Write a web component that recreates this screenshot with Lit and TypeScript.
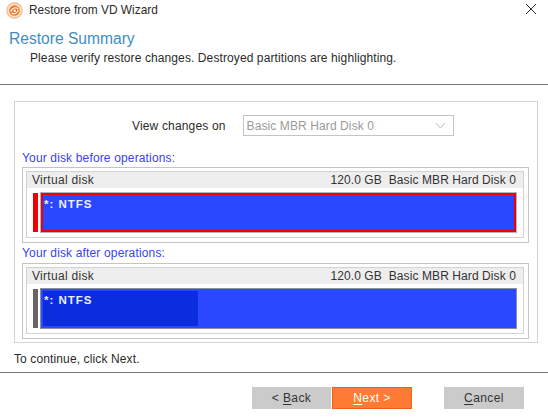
import { LitElement, html, css } from "lit";
import { customElement } from "lit/decorators.js";

@customElement("app-root")
export class AppRoot extends LitElement {
  static styles = css`
    :host { display: block; width: 548px; height: 419px; background: #fff; overflow: hidden;
      font-family: "Liberation Sans", Arial, sans-serif; font-size: 12px; color: #2b2b2b; }
    .title { height: 20px; display: flex; align-items: center; padding-left: 6px; gap: 6px; font-size: 11.9px; }
    .title svg.logo { width: 17px; height: 17px; flex: none; }
    .title span { flex: 1; }
    .title svg.close { width: 12px; height: 12px; margin-right: 11px; margin-top: -3px; }
    .head { height: 65px; box-sizing: border-box; border-bottom: 1px solid #777; padding: 9px 0 0 9px; }
    .head h1 { margin: 0; font-size: 15.6px; font-weight: 400; color: #3c8ec4; line-height: 19px; }
    .head p { margin: 3px 0 0 21px; font-size: 12px; line-height: 14px; letter-spacing: 0.1px; }
    .panel { margin: 16px 10px 0 14px; height: 242px; box-sizing: border-box; border: 1px solid #d4d4d4; padding: 13px 7px 0 7px; }
    .view { display: flex; align-items: center; height: 21px; padding-left: 110px; gap: 17px; }
    .view > span { letter-spacing: 0.16px; }
    .select { width: 211px; height: 21px; box-sizing: border-box; border: 1px solid #c4c4c4; display: flex; align-items: center;
      justify-content: space-between; padding: 0 7px 0 3px; color: #9a9a9a; letter-spacing: 0.1px; }
    .select svg { width: 11px; height: 7px; }
    .label { color: #3a3ff0; height: 14px; line-height: 14px; margin-top: 15px; letter-spacing: 0.15px; }
    .label.second { margin-top: 3px; }
    .outer { margin-top: 2px; width: 507px; height: 76px; box-sizing: border-box; border: 1px solid #c4c4c4; padding: 3px 4px 4px 3px; }
    .label.second + .outer { margin-top: 3px; }
    .inner { height: 100%; box-sizing: border-box; border: 1px solid #d2d2d2; }
    .dh { height: 16px; background: #eeeeee; display: flex; justify-content: space-between; align-items: center; padding: 0 7px 0 5px; color: #333; }
    .dh .name { letter-spacing: 0.3px; }
    .dh .info { letter-spacing: 0.09px; }
    .bars { display: flex; gap: 3px; padding: 5px 6px 0 6px; height: 39px; }
    .stripe { width: 5px; flex: none; }
    .stripe.red { background: #f00000; }
    .stripe.grey { background: #666; }
    .part { flex: 1; box-sizing: border-box; background: #2a48ff; color: #eef; font-weight: 700; font-size: 11.5px; letter-spacing: 1px; display: flex; line-height: 14px; }
    .part.red { border: 2px solid #f00000; margin-right: 1px; outline: 1px solid #b4b4bc; padding: 2px 0 0 1px; }
    .part.blue { border: 2px solid #2a48ff; margin-right: 1px; outline: 1px solid #8f8f9f; }
    .used { width: 155px; height: 100%; background: #0a2ede; padding: 2px 0 0 1px; box-sizing: border-box; }
    .continue { padding-left: 14px; height: 15px; line-height: 15px; margin-top: 9px; font-size: 12px; letter-spacing: 0.12px; }
    .rule { border-top: 1px solid #777; margin-top: 5px; }
    .btns { display: flex; padding: 14px 0 0 252px; }
    .btn { width: 79px; height: 22px; box-sizing: border-box; background: #cbcbcb; display: flex; align-items: center; justify-content: center; color: #333; letter-spacing: 0.4px; }
    .btn u { text-underline-offset: 2px; }
    .btn.next { width: 80px; margin-left: 1px; background: #ff7a33; border: 1px solid #f0601a; color: #fff; }
    .btn.cancel { width: 80px; margin-left: 32px; }
  `;

  private disk(kind: "before" | "after") {
    return html`<div class="outer"><div class="inner">
      <div class="dh"><span class="name">Virtual disk</span><span class="info">120.0 GB&nbsp; Basic MBR Hard Disk 0</span></div>
      <div class="bars">
        <div class="stripe ${kind === "before" ? "red" : "grey"}"></div>
        ${kind === "before"
          ? html`<div class="part red">*: NTFS</div>`
          : html`<div class="part blue"><div class="used">*: NTFS</div></div>`}
      </div>
    </div></div>`;
  }

  render() {
    return html`
      <div class="title">
        <svg class="logo" viewBox="0 0 17 17">
          <circle cx="8.5" cy="8.5" r="7.6" fill="#fce3cf" stroke="#f8b486" stroke-width="1.2"/>
          <circle cx="8.5" cy="8.5" r="5.3" fill="#f07a2a"/>
          <path d="M4.8 9.5C6 5.6 10 4.8 12.2 7M12.2 8C11.7 11.2 8 12.8 5.8 11" fill="none" stroke="#fff" stroke-width="1.1"/>
          <circle cx="8.7" cy="8.7" r="1.2" fill="#fff"/>
        </svg>
        <span>Restore from VD Wizard</span>
        <svg class="close" viewBox="0 0 12 12"><path d="M1 1L11 11M11 1L1 11" stroke="#333" stroke-width="1" fill="none"/></svg>
      </div>
      <div class="head">
        <h1>Restore Summary</h1>
        <p>Please verify restore changes. Destroyed partitions are highlighting.</p>
      </div>
      <div class="panel">
        <div class="view">
          <span>View changes on</span>
          <div class="select"><span>Basic MBR Hard Disk 0</span>
            <svg viewBox="0 0 11 7"><path d="M1 1L5.5 6L10 1" fill="none" stroke="#bbb" stroke-width="1"/></svg>
          </div>
        </div>
        <div class="label">Your disk before operations:</div>
        ${this.disk("before")}
        <div class="label second">Your disk after operations:</div>
        ${this.disk("after")}
      </div>
      <div class="continue">To continue, click Next.</div>
      <div class="rule"></div>
      <div class="btns">
        <div class="btn">&lt;&nbsp;<u>B</u>ack</div>
        <div class="btn next"><u>N</u>ext &gt;</div>
        <div class="btn cancel"><u>C</u>ancel</div>
      </div>
    `;
  }
}
